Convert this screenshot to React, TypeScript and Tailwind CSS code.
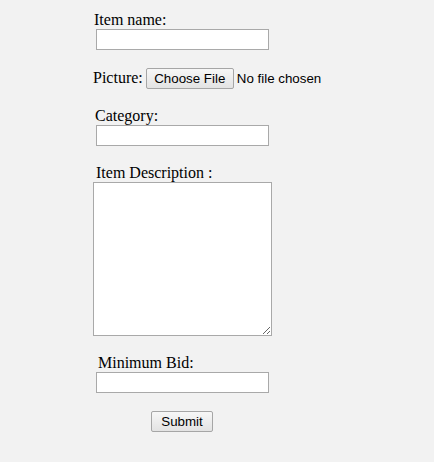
export default function App() {
  const label = "block h-[18px] leading-[18px] text-[16px] text-black";
  const field =
    "block h-[21px] w-[173px] border border-[#a9a9a9] bg-white px-[2px] text-[13px] outline-none";
  const btn =
    "h-[21px] rounded-[2px] border border-[#a6a6a6] bg-gradient-to-b from-[#f7f7f7] to-[#e3e3e3] px-[6px] text-[13.33px] leading-[15px] text-black font-['Liberation_Sans',Arial,sans-serif]";

  return (
    <div className="min-h-[462px] w-[434px] bg-[#f2f2f2] font-['Liberation_Serif','Times_New_Roman',serif]">
      <form
        className="flex flex-col pl-[93px] pt-[11px]"
        onSubmit={(e) => e.preventDefault()}
      >
        <label className={`${label} ml-[1px]`}>Item name:</label>
        <input type="text" className={`${field} ml-[3px]`} />

        <div className="mt-[18px] flex items-baseline">
          <span className="text-[16px] leading-[18px] text-black">Picture:</span>
          <button type="button" className={`${btn} ml-[3px] w-[88px]`}>
            Choose File
          </button>
          <span className="ml-[3px] text-[13.33px] text-black font-['Liberation_Sans',Arial,sans-serif]">
            No file chosen
          </span>
        </div>

        <label className={`${label} ml-[2px] mt-[18px]`}>Category:</label>
        <input type="text" className={`${field} ml-[3px]`} />

        <label className={`${label} ml-[3px] mt-[18px]`}>Item Description :</label>
        <textarea className="block h-[154px] w-[179px] border border-[#a9a9a9] bg-white p-[2px] text-[13px] outline-none" />

        <label className={`${label} ml-[5px] mt-[18px]`}>Minimum Bid:</label>
        <input type="text" className={`${field} ml-[3px]`} />

        <div className="mt-[16px]">
          <button type="submit" className={`${btn} ml-[58px] w-[62px]`}>
            Submit
          </button>
        </div>
      </form>
    </div>
  );
}
